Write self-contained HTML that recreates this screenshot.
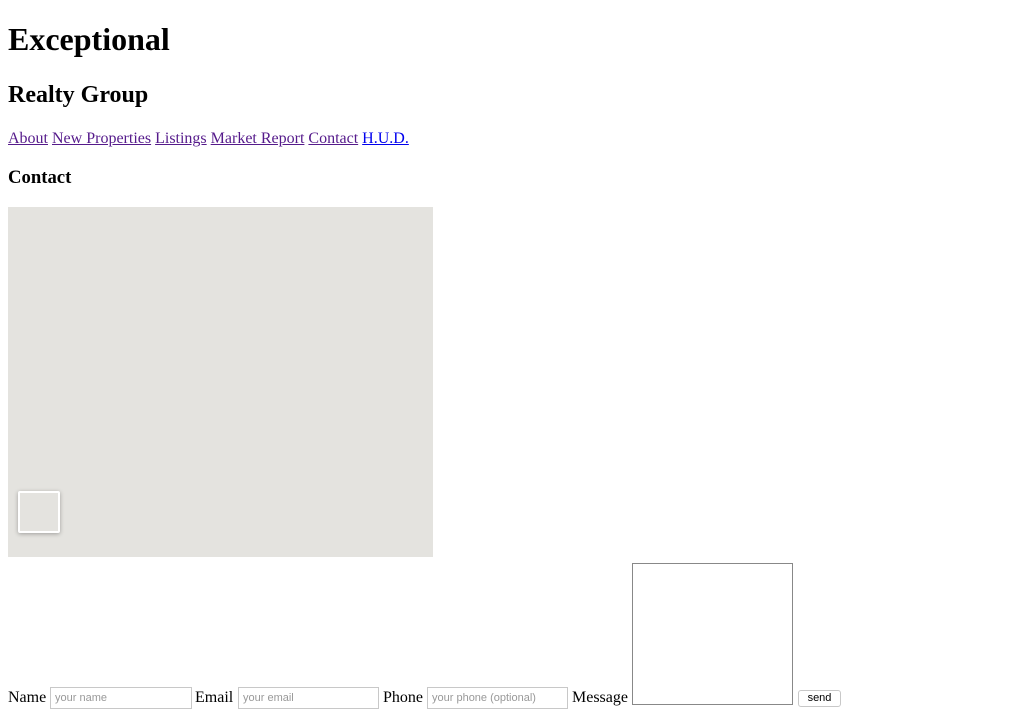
<!DOCTYPE html>
<html><head><style>
body{margin:0;background:#fff;font-family:"Liberation Serif",serif;color:#000;width:1024px;height:717px;position:relative;overflow:hidden}
.a{position:absolute;white-space:nowrap}
a{color:#551a8b;text-decoration:underline}
a.b{color:#0000ee}
.in{position:absolute;height:22px;border:1px solid #c8c8c8;box-sizing:border-box;font:11px "Liberation Sans",sans-serif;color:#999;padding:4px 4px;line-height:13px}
</style></head><body>
<div class="a" style="left:8px;top:19px;font-size:32px;font-weight:bold;line-height:40px">Exceptional</div>
<div class="a" style="left:8px;top:80px;font-size:24px;font-weight:bold;line-height:30px">Realty Group</div>
<div class="a" style="left:8px;top:129px;font-size:16px;line-height:20px"><a>About</a> <a>New Properties</a> <a>Listings</a> <a>Market Report</a> <a>Contact</a> <a class="b">H.U.D.</a></div>
<div class="a" style="left:8px;top:167px;font-size:18.7px;font-weight:bold;line-height:22px">Contact</div>
<div class="a" style="left:8px;top:207px;width:425px;height:350px;background:#e4e3df"></div>
<div class="a" style="left:18px;top:491px;width:38px;height:38px;border:2px solid #fff;border-radius:2px;background:#e4e3df;box-shadow:0 1px 4px rgba(0,0,0,.3)"></div>
<div class="a" style="left:8px;top:688px;font-size:16px;line-height:20px">Name</div>
<div class="in" style="left:50px;top:687px;width:142px">your name</div>
<div class="a" style="left:195px;top:688px;font-size:16px;line-height:20px">Email</div>
<div class="in" style="left:238px;top:687px;width:141px">your email</div>
<div class="a" style="left:383px;top:688px;font-size:16px;line-height:20px">Phone</div>
<div class="in" style="left:427px;top:687px;width:141px">your phone (optional)</div>
<div class="a" style="left:572px;top:688px;font-size:16px;line-height:20px">Message</div>
<div class="a" style="left:632px;top:563px;width:161px;height:142px;border:1px solid #888;box-sizing:border-box"></div>
<div class="a" style="left:798px;top:690px;width:43px;height:17px;border:1px solid #c8c8c8;border-radius:3px;box-sizing:border-box;font:11px 'Liberation Sans',sans-serif;text-align:center;line-height:15px">send</div>
</body></html>
